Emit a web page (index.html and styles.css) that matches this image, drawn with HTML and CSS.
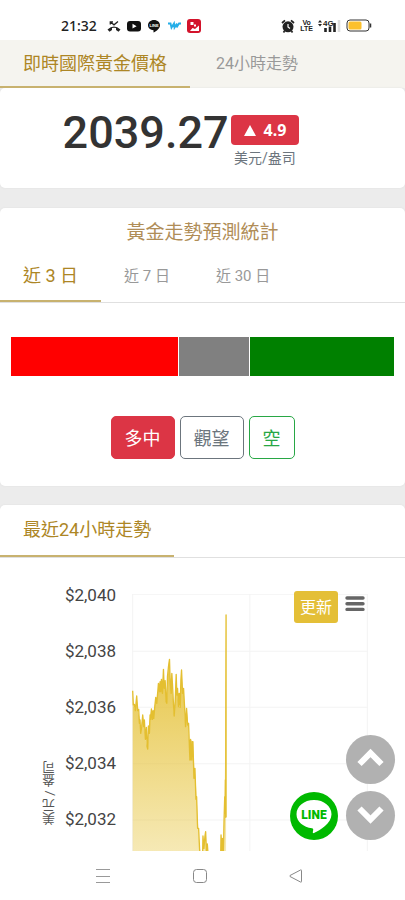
FILE: index.html
```
<!DOCTYPE html>
<html lang="zh-Hant">
<head>
<meta charset="utf-8">
<meta name="viewport" content="width=device-width, initial-scale=1">
<title>即時國際黃金價格</title>
<link rel="stylesheet" href="styles.css">
</head>
<body>
<header class="status">
  <div class="status-group">
    <span class="clock">21:32</span>
    <svg class="ico" viewBox="0 0 14 14"><path d="M.5 10.500Q7 4.500 13.500 10.500L11.500 12.800L9 11V9Q7 8.400 5 9V11L2.500 12.800Z" fill="#222"/><path d="M3.300 5.500V2.800H6M3.500 3L7 5.800L11 2.500" fill="none" stroke="#222" stroke-width="1.300"/></svg>
    <svg class="ico" viewBox="0 0 14 14"><rect y="2" width="14" height="10.500" rx="3" fill="#111"/><path d="M5.500 4.800V9.600L9.600 7.200Z" fill="#fff"/></svg>
    <svg class="ico" viewBox="0 0 14 14"><path d="M7 1C3.400 1 1 3.300 1 6.200C1 9 3.500 10.900 6.500 11.200V13.500C9.500 12 13 9.500 13 6.200C13 3.300 10.500 1 7 1Z" fill="#111"/><text x="7" y="7.700" text-anchor="middle" class="mini-line">LINE</text></svg>
    <svg class="ico" viewBox="0 0 14 14"><path d="M1 4.500H3.500L4.500 8.500L7 4.500L7.500 8.500L10 4.500M9.500 8.500L12 4.500H14" fill="none" stroke="#25aee8" stroke-width="1.900"/></svg>
    <svg class="ico" viewBox="0 0 14 14"><rect width="14" height="14" rx="3" fill="#d3132b"/><path d="M3.500 3H6.500V6H3.500ZM7 5.500H9V7.500H7ZM3 12L5.500 9L8 10L12 6.500V12Z" fill="#fff"/></svg>
  </div>
  <div class="status-group status-right">
    <svg class="ico" viewBox="0 0 14 14"><circle cx="7" cy="7.800" r="5.500" fill="#222"/><path d="M1 4L4 1.300M13 4L10 1.300M3.500 12L2.500 13.500M10.500 12L11.500 13.500" stroke="#222" stroke-width="1.700"/><path d="M7 5V8L9 9.500" fill="none" stroke="#fff" stroke-width="1.200"/></svg>
    <span class="volte">Vo<br>LTE</span>
    <svg class="signal" viewBox="0 0 23 14"><path d="M0 3.500L2 1L4 3.500ZM0 5L2 7.500L4 5Z" fill="#222"/><text x="5" y="6.500" class="mini-4g">4G</text><path d="M7.500 13V9M12 13V7.500M16.500 13V4" stroke="#222" stroke-width="2.600"/><path d="M21 13V1" stroke="#ddd" stroke-width="2.600"/></svg>
    <svg class="battery" viewBox="0 0 26 13"><rect x="1" y="1" width="22" height="11" rx="3" fill="none" stroke="#333"/><rect x="2.500" y="2.500" width="13" height="8" rx="1.500" fill="#fbc02d"/><path d="M24.500 4.500V8.500" stroke="#333" stroke-width="1.500"/></svg>
  </div>
</header>

<main class="page">
  <nav class="tabs tabs-top">
    <a class="tab active" href="#price">即時國際黃金價格</a>
    <a class="tab" href="#trend">24小時走勢</a>
  </nav>

  <section class="card price-card" id="price">
    <span class="price">2039.27</span>
    <div class="change">
      <span class="badge"><svg class="tri" viewBox="0 0 12 11"><path d="M6 0L12 11H0Z" fill="#fff"/></svg>4.9</span>
      <span class="unit">美元/盎司</span>
    </div>
  </section>

  <section class="card">
    <h2 class="title">黃金走勢預測統計</h2>
    <nav class="tabs tabs-days">
      <a class="tab active" href="#d3">近 3 日</a>
      <a class="tab" href="#d7">近 7 日</a>
      <a class="tab" href="#d30">近 30 日</a>
    </nav>
    <div class="votes">
      <div class="vote long"></div>
      <div class="vote hold"></div>
      <div class="vote short"></div>
    </div>
    <div class="actions">
      <button class="btn btn-long" type="button">多中</button>
      <button class="btn btn-hold" type="button">觀望</button>
      <button class="btn btn-short" type="button">空</button>
    </div>
  </section>

  <section class="card" id="trend">
    <nav class="tabs">
      <a class="tab active" href="#trend">最近24小時走勢</a>
    </nav>
    <div class="chart">
      <div class="axis-title">美元 / 盎司</div>
      <div class="ticks"><span>$2,040</span><span>$2,038</span><span>$2,036</span><span>$2,034</span><span>$2,032</span></div>
      <div class="plot">
        <svg class="plot-svg" viewBox="66 42 705 771" preserveAspectRatio="none">
          <defs><linearGradient id="gold" x1="0" y1="100" x2="0" y2="900" gradientUnits="userSpaceOnUse"><stop offset="0" stop-color="#e3bd2f"/><stop offset="1" stop-color="#e7c53b" stop-opacity=".3"/></linearGradient></defs>
          <path d="M66 43H771M66 214H771M66 382H771M66 551H771M66 720H771M68 42V813M418 42V813M769 42V813" stroke="#f4f4f4" stroke-width="3"/>
          <path fill="url(#gold)" d="M68 332L70 375L76 390L80 348L84 395L88 410L92 460L98 405L103 440L108 485L113 507L116 440L120 410L124 385L127 415L132 395L136 360L142 350L145 312L150 318L153 298L156 330L160 270L163 318L167 305L170 370L173 290L177 238L181 300L185 280L188 350L192 408L198 285L202 345L205 380L210 380L214 270L217 320L221 335L225 440L229 385L234 430L239 540L242 480L248 485L252 560L256 595L259 650L264 745L270 820H68ZM277 820V770L281 785L286 755L290 800L293 820ZM331 820V765L338 800L343 650L347 105V820Z"/>
          <path fill="none" stroke="#e4bf30" stroke-width="4" stroke-linejoin="round" d="M68 332L70 375L73 373L76 392L78 370L80 348L83 392L86 388L88 430L90 420L92 460L95 440L98 405L101 440L103 420L106 478L109 442L111 500L113 507L115 438L118 460L120 405L122 418L124 387L127 418L129 392L131 415L134 380L137 352L140 370L143 335L145 310L148 335L150 305L152 335L154 298L157 340L160 268L162 325L165 302L168 365L170 370L172 290L175 260L178 238L180 305L183 340L185 280L187 315L190 375L192 408L195 365L198 283L200 345L202 325L205 380L207 340L210 382L212 300L214 270L217 340L220 325L223 380L226 440L229 385L232 435L235 430L239 540L241 478L243 540L246 485L248 540L248 485L251 595L254 565L257 658L259 650L262 745L265 745L268 810L270 820M277 820L278 768L281 805L284 768L286 755L288 812L291 792L293 820M331 820L332 765L335 815L336 775L339 820L341 720L343 650L344 700L345 600L346 712L347 105L347 712"/>
        </svg>
        <div class="chart-tools">
          <button class="refresh" type="button">更新</button>
          <button class="menu" type="button" aria-label="選單"><svg viewBox="0 0 20 16" width="20" height="16"><path d="M2 2H18M2 7.700H18M2 13.400H18" stroke="#666" stroke-width="3.400" stroke-linecap="round"/></svg></button>
        </div>
      </div>
    </div>
  </section>

  <div class="floating">
    <a class="line-link" href="#line" aria-label="LINE"><svg viewBox="0 0 48 48" width="48" height="48"><circle cx="24" cy="24" r="24" fill="#00b900"/><path d="M24 8C14 8 6.500 14.300 6.500 22.200C6.500 29.500 13.500 35.300 22 36.200C24 36.500 23 38.500 22.800 40.500C22.800 41.200 23.300 41.300 24 41C30 38 41.500 31.500 41.500 22.200C41.500 14.300 34 8 24 8Z" fill="#fff"/><text x="24" y="26.500" text-anchor="middle" class="line-word">LINE</text></svg></a>
    <div class="scrollers">
      <button class="round" type="button" aria-label="向上"><svg viewBox="0 0 49 49" width="49" height="49"><path d="M13.500 29L24.500 18L35.500 29" fill="none" stroke="#fff" stroke-width="6"/></svg></button>
      <button class="round" type="button" aria-label="向下"><svg viewBox="0 0 49 49" width="49" height="49"><path d="M13.500 17.500L24.500 28.500L35.500 17.500" fill="none" stroke="#fff" stroke-width="6"/></svg></button>
    </div>
  </div>
</main>

<footer class="sysnav">
  <svg viewBox="0 0 16 16" width="16" height="16"><path d="M1 1.500H15M1 8.500H15M1 14.500H15" stroke="#999"/></svg>
  <svg viewBox="0 0 16 16" width="16" height="16"><rect x="1.500" y="1.500" width="13" height="13" rx="3" fill="none" stroke="#888"/></svg>
  <svg viewBox="0 0 16 16" width="16" height="16"><path d="M13.500 2.500V13.500Q13.500 14.500 12.500 14L2 8.500Q1.500 8 2 7.500L12.500 2Q13.500 1.500 13.500 2.500Z" fill="none" stroke="#888"/></svg>
</footer>
</body>
</html>
```

FILE: styles.css
```
* { box-sizing: border-box; }
body {
  margin: 0;
  height: 100vh;
  display: flex;
  flex-direction: column;
  background: #fff;
  color: #333;
  font-family: Roboto, "Noto Sans CJK TC", sans-serif;
}
a { text-decoration: none; }
button { font-family: inherit; cursor: pointer; }
svg { display: block; }

.status {
  flex: none;
  height: 40px;
  padding: 11px 33px 0 61px;
  display: flex;
  justify-content: space-between;
}
.status-group { display: flex; align-items: center; gap: 6px; height: 29px; }
.clock { font: 500 14px "Noto Sans", sans-serif; color: #222; margin-right: 4px; }
.ico { width: 14px; height: 14px; }
.volte { font: bold 7px/6px "Liberation Sans", sans-serif; text-align: center; color: #222; }
.mini-line { font: bold 4px "Liberation Sans", sans-serif; fill: #fff; }
.mini-4g { font: bold 8px "Liberation Sans", sans-serif; fill: #222; }
.signal { width: 23px; height: 14px; }
.battery { width: 26px; height: 13px; }
.status-right { gap: 5px; }

.page {
  flex: 1;
  min-height: 0;
  overflow: hidden;
  position: relative;
  background: #ececec;
}
.tabs { display: flex; border-bottom: 1px solid #e0e0e0; }
.tab {
  padding: 0 23px;
  height: 52px;
  line-height: 50px;
  font-size: 16px;
  color: #999;
  border-bottom: 2px solid transparent;
}
.tab.active { font-size: 18px; color: #ad8625; border-color: #c8b26f; }
.tabs-top { background: #f5f4ef; gap: 3px; border: 0; }
.tabs-top .tab { height: 48px; line-height: 48px; }
.tabs-days { padding-top: 2px; }
.tabs-days .tab { line-height: 52px; font-size: 15px; }
.tabs-days .active { font-size: 18px; }

.card {
  background: #fff;
  border-radius: 5px;
  margin-bottom: 19px;
  box-shadow: 0 0 2px #ddd;
}
.price-card {
  height: 100px;
  margin-bottom: 20px;
  padding: 18px 63px 0 20px;
  display: flex;
  justify-content: center;
  gap: 2px;
}
.price { font-size: 45px; font-weight: 500; line-height: 54px; }
.change { display: flex; flex-direction: column; align-items: center; padding-top: 9px; }
.badge {
  display: flex;
  align-items: center;
  gap: 8px;
  height: 30px;
  padding: 0 13px;
  border-radius: 4px;
  background: #dc3545;
  color: #fff;
  font: bold 16px "Noto Sans", sans-serif;
}
.tri { width: 12px; height: 11px; }
.unit { font-size: 14px; line-height: 26px; color: #6c757d; }

.title {
  margin: 0;
  padding-top: 10px;
  text-align: center;
  font-size: 19px;
  font-weight: 400;
  line-height: 30px;
  color: #b08d57;
}
.votes { display: flex; gap: 1px; height: 39px; margin: 34px 11px 40px; }
.long { flex: 167; background: red; }
.hold { flex: 70; background: gray; }
.short { flex: 144; background: green; }
.actions { display: flex; justify-content: center; gap: 5px; padding-bottom: 27px; }
.btn {
  height: 43px;
  padding: 0 13px 2px;
  border: 1px solid;
  border-radius: 5px;
  background: #fff;
  font-size: 18px;
}
.btn-long { background: #dc3545; border-color: #dc3545; color: #fff; }
.btn-hold { color: #6c757d; }
.btn-short { color: #28a745; }

.chart { display: flex; padding: 36px 37px 0 41px; }
.axis-title {
  writing-mode: vertical-rl;
  transform: rotate(180deg);
  width: 17px;
  height: 231px;
  line-height: 17px;
  font-size: 13px;
  color: #555;
}
.ticks {
  width: 58px;
  display: flex;
  flex-direction: column;
  align-items: flex-end;
  margin-top: -9px;
  font-size: 17px;
  color: #444;
}
.ticks span { height: 56px; line-height: 20px; }
.plot { flex: 1; position: relative; margin-left: 16px; }
.plot-svg { width: 100%; height: 257px; }
.chart-tools { position: absolute; top: -3px; right: 3px; display: flex; align-items: flex-start; gap: 7px; }
.refresh {
  width: 44px;
  height: 32px;
  padding: 0 0 3px;
  border: 0;
  border-radius: 3px;
  background: #e4bf37;
  color: #fff;
  font-size: 16px;
}
.menu { padding: 5px 0; border: 0; background: none; }

.floating { position: absolute; right: 10px; bottom: 11px; display: flex; align-items: flex-end; gap: 8px; }
.scrollers { display: flex; flex-direction: column; gap: 7px; }
.round { width: 49px; height: 49px; padding: 0; border: 0; border-radius: 50%; background: #b1b1b1; }
.line-word { font: 900 12px Roboto, sans-serif; fill: #00b900; }

.sysnav {
  flex: none;
  height: 49px;
  padding: 0 101px 0 95px;
  display: flex;
  align-items: center;
  justify-content: space-between;
}
```
